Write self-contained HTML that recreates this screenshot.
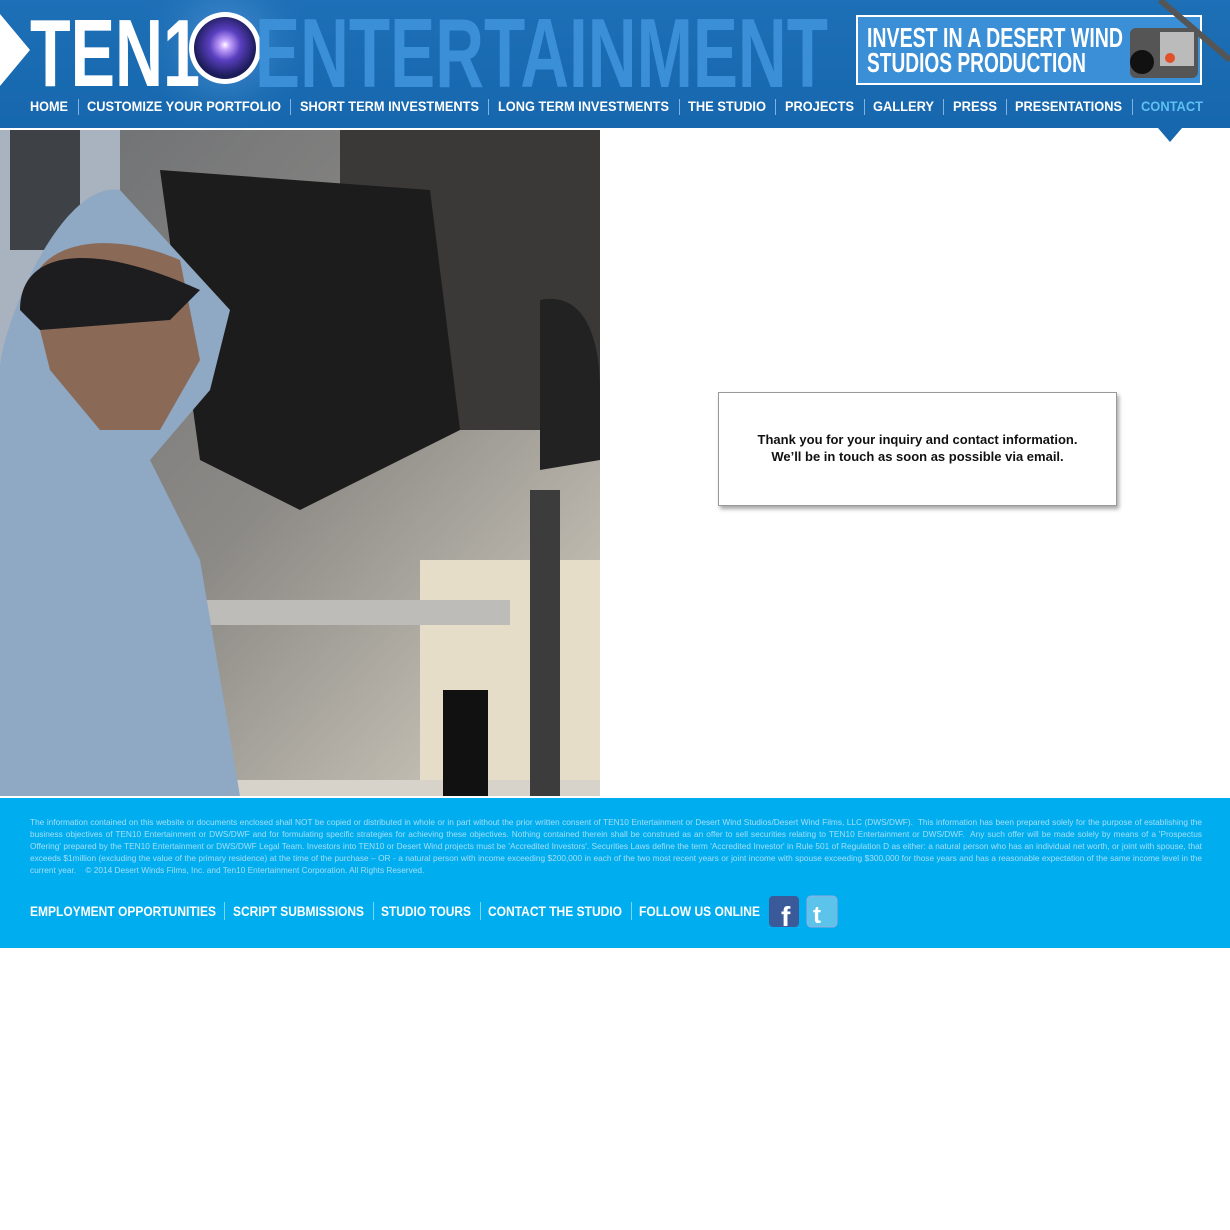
<!DOCTYPE html>
<html><head><meta charset="utf-8"><style>
body{margin:0;width:1230px;height:1230px;background:#fff;position:relative;overflow:hidden;font-family:"Liberation Sans",Arial,sans-serif}
.abs{position:absolute}
</style></head><body>
<svg class="abs" style="left:0;top:0" width="1230" height="130">
<defs>
<linearGradient id="hg" x1="0" y1="0" x2="0" y2="1"><stop offset="0" stop-color="#1d6fb6"/><stop offset="1" stop-color="#1667ad"/></linearGradient>
<radialGradient id="lens" cx="0.5" cy="0.45" r="0.5"><stop offset="0" stop-color="#fff"/><stop offset="0.15" stop-color="#c9a6ff"/><stop offset="0.5" stop-color="#5a3fc0"/><stop offset="1" stop-color="#1c1c5a"/></radialGradient>
<radialGradient id="glow" cx="0.5" cy="0.5" r="0.5"><stop offset="0" stop-color="#6aa4e6" stop-opacity="0.7"/><stop offset="1" stop-color="#1d6fb6" stop-opacity="0"/></radialGradient>
</defs>
<rect width="1230" height="128" fill="url(#hg)"/>
<rect y="128" width="1230" height="2" fill="#fff"/>
<circle cx="225" cy="45" r="90" fill="url(#glow)"/>
<polygon points="0,14 30,50 0,86" fill="#fff"/>
<text x="30" y="86" font-family="Liberation Sans" font-weight="bold" font-size="96" fill="#fff" textLength="170" lengthAdjust="spacingAndGlyphs">TEN1</text>
<circle cx="225" cy="48" r="36" fill="#fff"/>
<circle cx="225" cy="48" r="31" fill="url(#lens)"/>
<text x="255" y="87" font-family="Liberation Sans" font-weight="bold" font-size="98" fill="#3a8fd6" textLength="573" lengthAdjust="spacingAndGlyphs">ENTERTAINMENT</text>
<rect x="857" y="16" width="344" height="68" fill="#3a8fd6" stroke="#fff" stroke-width="2"/>
<text x="867" y="47" font-family="Liberation Sans" font-weight="bold" font-size="28" fill="#fff" textLength="256" lengthAdjust="spacingAndGlyphs">INVEST IN A DESERT WIND</text>
<text x="867" y="72" font-family="Liberation Sans" font-weight="bold" font-size="28" fill="#fff" textLength="219" lengthAdjust="spacingAndGlyphs">STUDIOS PRODUCTION</text>
<line x1="1160" y1="0" x2="1230" y2="60" stroke="#555" stroke-width="6"/>
<rect x="1130" y="28" width="68" height="50" rx="6" fill="#555"/>
<rect x="1160" y="32" width="34" height="34" fill="#bbb"/>
<circle cx="1142" cy="62" r="12" fill="#111"/>
<circle cx="1170" cy="58" r="5" fill="#e0502a"/>
<g font-family="Liberation Sans" font-weight="bold" font-size="13.5" fill="#fff">
<text x="30" y="111" textLength="38" lengthAdjust="spacingAndGlyphs">HOME</text>
<text x="87" y="111" textLength="194" lengthAdjust="spacingAndGlyphs">CUSTOMIZE YOUR PORTFOLIO</text>
<text x="300" y="111" textLength="179" lengthAdjust="spacingAndGlyphs">SHORT TERM INVESTMENTS</text>
<text x="498" y="111" textLength="171" lengthAdjust="spacingAndGlyphs">LONG TERM INVESTMENTS</text>
<text x="688" y="111" textLength="78" lengthAdjust="spacingAndGlyphs">THE STUDIO</text>
<text x="785" y="111" textLength="69" lengthAdjust="spacingAndGlyphs">PROJECTS</text>
<text x="873" y="111" textLength="61" lengthAdjust="spacingAndGlyphs">GALLERY</text>
<text x="953" y="111" textLength="44" lengthAdjust="spacingAndGlyphs">PRESS</text>
<text x="1015" y="111" textLength="107" lengthAdjust="spacingAndGlyphs">PRESENTATIONS</text>
<text x="1141" y="111" textLength="62" lengthAdjust="spacingAndGlyphs" fill="#5ec0f2">CONTACT</text>
</g>
<g stroke="#7fb2e0" stroke-width="1">
<line x1="78.5" y1="99" x2="78.5" y2="115"/><line x1="290.5" y1="99" x2="290.5" y2="115"/><line x1="488.5" y1="99" x2="488.5" y2="115"/><line x1="679.5" y1="99" x2="679.5" y2="115"/><line x1="775.5" y1="99" x2="775.5" y2="115"/><line x1="864.5" y1="99" x2="864.5" y2="115"/><line x1="943.5" y1="99" x2="943.5" y2="115"/><line x1="1006.5" y1="99" x2="1006.5" y2="115"/><line x1="1132.5" y1="99" x2="1132.5" y2="115"/>
</g>
</svg>
<svg class="abs" style="left:1158px;top:128px" width="24" height="14"><polygon points="0,0 24,0 12,14" fill="#1667ad"/></svg>
<svg class="abs" style="left:0;top:130px" width="600" height="666">
<defs><linearGradient id="bg" x1="0" y1="0" x2="1" y2="1"><stop offset="0" stop-color="#6c6e72"/><stop offset="0.5" stop-color="#8c8a86"/><stop offset="1" stop-color="#d8d2c4"/></linearGradient></defs>
<rect width="600" height="666" fill="url(#bg)"/>
<rect x="0" y="0" width="120" height="666" fill="#a9b3bf"/>
<rect x="340" y="0" width="260" height="300" fill="#3a3938"/>
<rect x="420" y="430" width="180" height="236" fill="#e6ddc8"/>
<rect x="0" y="650" width="600" height="16" fill="#d7d3ca"/>
<rect x="10" y="0" width="70" height="120" fill="#3e4247"/>
<path d="M160 40 L430 60 L460 300 L300 380 L200 330 Z" fill="#1c1c1c"/>
<rect x="170" y="470" width="340" height="25" fill="#bdbcb8"/>
<path d="M120 60 C60 50 0 200 0 240 L0 666 L240 666 L200 430 L150 330 L210 260 L230 180 Z" fill="#8fa8c4"/>
<path d="M30 160 C40 110 110 100 180 130 L200 230 L160 300 L100 300 L50 240 Z" fill="#8a6a56"/>
<path d="M20 180 C20 120 90 110 200 160 L170 190 L40 200 Z" fill="#1d1d1f"/>
<path d="M540 170 C590 160 600 220 600 260 L600 330 L540 340 Z" fill="#222"/>
<rect x="530" y="360" width="30" height="306" fill="#3c3c3c"/>
<rect x="443" y="560" width="45" height="106" fill="#111"/>
</svg>
<div class="abs" style="left:0;top:798px;width:1230px;height:150px;background:#00aeef"></div>
<div class="abs" style="left:30px;top:816px;width:1172px;font-size:8.3px;line-height:12px;color:#a6def8;text-align:justify">The information contained on this website or documents enclosed shall NOT be copied or distributed in whole or in part without the prior written consent of TEN10 Entertainment or Desert Wind Studios/Desert Wind Films, LLC (DWS/DWF).&nbsp; This information has been prepared solely for the purpose of establishing the business objectives of TEN10 Entertainment or DWS/DWF and for formulating specific strategies for achieving these objectives. Nothing contained therein shall be construed as an offer to sell securities relating to TEN10 Entertainment or DWS/DWF.&nbsp; Any such offer will be made solely by means of a 'Prospectus Offering' prepared by the TEN10 Entertainment or DWS/DWF Legal Team. Investors into TEN10 or Desert Wind projects must be 'Accredited Investors'. Securities Laws define the term 'Accredited Investor' in Rule 501 of Regulation D as either: a natural person who has an individual net worth, or joint with spouse, that exceeds $1million (excluding the value of the primary residence) at the time of the purchase – OR - a natural person with income exceeding $200,000 in each of the two most recent years or joint income with spouse exceeding $300,000 for those years and has a reasonable expectation of the same income level in the current year. &nbsp;&nbsp; © 2014 Desert Winds Films, Inc. and Ten10 Entertainment Corporation. All Rights Reserved.</div>
<svg class="abs" style="left:0;top:890px" width="860" height="45">
<g font-family="Liberation Sans" font-weight="bold" font-size="13.5" fill="#fff">
<text x="30" y="26" textLength="186" lengthAdjust="spacingAndGlyphs">EMPLOYMENT OPPORTUNITIES</text>
<text x="233" y="26" textLength="131" lengthAdjust="spacingAndGlyphs">SCRIPT SUBMISSIONS</text>
<text x="381" y="26" textLength="90" lengthAdjust="spacingAndGlyphs">STUDIO TOURS</text>
<text x="488" y="26" textLength="134" lengthAdjust="spacingAndGlyphs">CONTACT THE STUDIO</text>
<text x="639" y="26" textLength="121" lengthAdjust="spacingAndGlyphs">FOLLOW US ONLINE</text>
</g>
<g stroke="#7fd3f7"><line x1="224.5" y1="12" x2="224.5" y2="30"/><line x1="373.5" y1="12" x2="373.5" y2="30"/><line x1="480.5" y1="12" x2="480.5" y2="30"/><line x1="631.5" y1="12" x2="631.5" y2="30"/></g>
<rect x="769" y="6" width="30" height="31" rx="4" fill="#3b5a9a"/>
<text x="781" y="36" font-family="Liberation Sans" font-weight="bold" font-size="28" fill="#fff">f</text>
<rect x="807" y="6" width="30" height="31" rx="4" fill="#5cc4ea" stroke="#9ad" stroke-width="1"/>
<text x="813" y="33" font-family="Liberation Sans" font-weight="bold" font-size="24" fill="#fff">t</text>
</svg>
<div class="abs" style="left:718px;top:392px;width:397px;height:112px;border:1px solid #999;box-shadow:2px 3px 4px rgba(0,0,0,.35);background:#fff;text-align:center;font-size:13px;font-weight:bold;line-height:17px;color:#111">
<div style="padding-top:38px">Thank you for your inquiry and contact information.<br>We’ll be in touch as soon as possible via email.</div></div>
</body></html>
